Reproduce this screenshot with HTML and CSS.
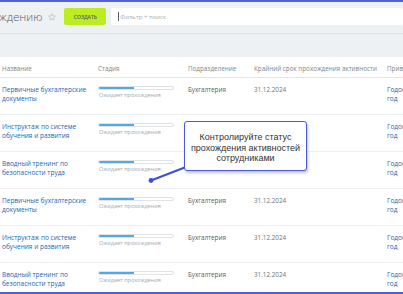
FILE: index.html
```html
<!DOCTYPE html>
<html lang="ru">
<head>
<meta charset="utf-8">
<link rel="stylesheet" href="styles.css">
</head>
<body>
<div class="page">
  <div class="toolbar">
    <span class="title">ждению</span>
    <svg class="star" viewBox="0 0 10 10" width="8" height="8"><path d="M5 0.8 L6.2 3.6 L9.2 3.8 L6.9 5.8 L7.6 8.8 L5 7.2 L2.4 8.8 L3.1 5.8 L0.8 3.8 L3.8 3.6 Z" fill="none" stroke="#b3b8be" stroke-width="0.8" stroke-linejoin="round"/></svg>
    <button class="btn">Создать</button>
    <div class="search"><span class="caret"></span><span class="ph">Фильтр + поиск</span></div>
  </div>
  <div class="sep"></div>
  <div class="grid">
    <div class="row head">
      <div class="c1">Название</div>
      <div class="c2">Стадия</div>
      <div class="c3">Подразделение</div>
      <div class="c4">Крайний срок прохождения активности</div>
      <div class="c5">Привязка</div>
    </div>
    <div class="row">
      <div class="c1"><a class="link">Первичные бухгалтерские документы</a></div>
      <div class="c2"><div class="bar"><div class="fill" style="width:49%"></div></div><div class="st">Ожидает прохождения</div></div>
      <div class="c3">Бухгалтерия</div>
      <div class="c4 date">31.12.2024</div>
      <div class="c5"><a class="link">Годовой план на год</a></div>
    </div>
    <div class="row">
      <div class="c1"><a class="link">Инструктаж по системе обучения и развития</a></div>
      <div class="c2"><div class="bar"><div class="fill" style="width:49%"></div></div><div class="st">Ожидает прохождения</div></div>
      <div class="c3">Бухгалтерия</div>
      <div class="c4 date">31.12.2024</div>
      <div class="c5"><a class="link">Годовой план на год</a></div>
    </div>
    <div class="row">
      <div class="c1"><a class="link">Вводный тренинг по безопасности труда</a></div>
      <div class="c2"><div class="bar"><div class="fill" style="width:49%"></div></div><div class="st">Ожидает прохождения</div></div>
      <div class="c3">Бухгалтерия</div>
      <div class="c4 date">31.12.2024</div>
      <div class="c5"><a class="link">Годовой план на год</a></div>
    </div>
    <div class="row">
      <div class="c1"><a class="link">Первичные бухгалтерские документы</a></div>
      <div class="c2"><div class="bar"><div class="fill" style="width:49%"></div></div><div class="st">Ожидает прохождения</div></div>
      <div class="c3">Бухгалтерия</div>
      <div class="c4 date">31.12.2024</div>
      <div class="c5"><a class="link">Годовой план на год</a></div>
    </div>
    <div class="row">
      <div class="c1"><a class="link">Инструктаж по системе обучения и развития</a></div>
      <div class="c2"><div class="bar"><div class="fill" style="width:49%"></div></div><div class="st">Ожидает прохождения</div></div>
      <div class="c3">Бухгалтерия</div>
      <div class="c4 date">31.12.2024</div>
      <div class="c5"><a class="link">Годовой план на год</a></div>
    </div>
    <div class="row">
      <div class="c1"><a class="link">Вводный тренинг по безопасности труда</a></div>
      <div class="c2"><div class="bar"><div class="fill" style="width:49%"></div></div><div class="st">Ожидает прохождения</div></div>
      <div class="c3">Бухгалтерия</div>
      <div class="c4 date">31.12.2024</div>
      <div class="c5"><a class="link">Годовой план на год</a></div>
    </div>
  </div>
  <svg class="pointer" width="403" height="294" viewBox="0 0 403 294">
    <line x1="186" y1="167" x2="151" y2="180.5" stroke="#3e50d6" stroke-width="2"/>
    <circle cx="151" cy="180.5" r="2.4" fill="#3e50d6"/>
  </svg>
  <div class="tip">Контролируйте статус<br>прохождения активностей<br>сотрудниками</div>
</div>
</body>
</html>
```
FILE: styles.css
```css
html, body {
  margin: 0;
  padding: 0;
  width: 403px;
  height: 294px;
  overflow: hidden;
}
.page {
  position: relative;
  width: 403px;
  height: 294px;
  box-sizing: border-box;
  overflow: hidden;
  background: #eef1f4;
  border-top: 2px solid #5063dc;
  border-bottom: 2px solid #4c60d8;
  font-family: "Open Sans", "Liberation Sans", sans-serif;
}
.toolbar {
  display: flex;
  align-items: center;
  height: 17px;
  margin-top: 6px;
}
.title {
  font-size: 11.5px;
  font-weight: 300;
  color: #535c69;
  line-height: 17px;
  margin-left: -1px;
}
.star {
  margin-left: 6px;
}
.btn {
  margin-left: 8px;
  width: 42px;
  height: 17px;
  border: 0;
  border-radius: 2px;
  background: #bbed21;
  color: #535c69;
  font-family: "Open Sans", sans-serif;
  font-size: 5px;
  font-weight: 600;
  text-transform: uppercase;
  padding: 0;
}
.search {
  flex: 1;
  margin-left: 5px;
  height: 17px;
  background: #fff;
  border-radius: 2px;
  display: flex;
  align-items: center;
  padding-left: 7px;
}
.caret {
  width: 1px;
  height: 9px;
  background: #535c69;
}
.ph {
  font-size: 6px;
  color: #a7acb3;
  margin-left: 1px;
}
.sep {
  margin-top: 8px;
  height: 1px;
  background: #dde1e5;
}
.grid {
  margin-top: 23px;
  background: #fff;
}
.row {
  display: grid;
  grid-template-columns: 96px 90px 66px 133px 80px;
  height: 37px;
  box-sizing: border-box;
  border-bottom: 1px solid #edf0f2;
  font-size: 6.3px;
  color: #535c69;
}
.row > div {
  padding: 7px 0 0 2px;
  line-height: 9px;
}
.row.head {
  height: 21px;
  border-bottom: 1px solid #e3e6e9;
  color: #80868e;
}
.row.head > div {
  padding-top: 6.5px;
  line-height: 9px;
  white-space: nowrap;
}
.link {
  color: #2067b0;
  font-size: 6.5px;
}
.c1 .link {
  display: block;
  width: 92px;
}
.c5 .link {
  display: block;
  width: 62px;
}
.bar {
  width: 76px;
  height: 4px;
  box-sizing: border-box;
  border: 1px solid #dfe3e6;
  border-radius: 2px;
  margin-top: 1px;
  overflow: hidden;
}
.fill {
  background: #55a8e2;
  margin: -1px 0 0 -1px;
  height: 4px;
}
.st {
  font-size: 5.5px;
  color: #a3a8ae;
  line-height: 8px;
  margin-top: 1px;
  margin-left: 1px;
  white-space: nowrap;
}
.date {
  color: #6a737d;
}
.pointer {
  position: absolute;
  left: 0;
  top: -2px;
  pointer-events: none;
}
.tip {
  position: absolute;
  left: 184px;
  top: 119px;
  width: 123px;
  height: 50px;
  box-sizing: border-box;
  background: #fff;
  border: 1px solid #4b5bd4;
  border-radius: 3px;
  box-shadow: 1px 2px 3px rgba(0, 0, 0, 0.25);
  padding-top: 10px;
  text-align: center;
  font-family: "Liberation Sans", Arial, sans-serif;
  font-size: 9px;
  line-height: 10.5px;
  color: #333;
}
```
